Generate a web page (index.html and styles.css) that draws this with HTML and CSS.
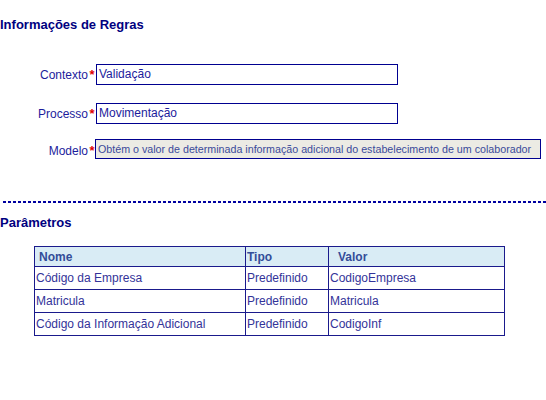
FILE: index.html
```html
<!DOCTYPE html>
<html lang="pt">
<head>
    <meta charset="UTF-8">
    <title>Informações de Regras</title>
    <link rel="stylesheet" href="styles.css">
</head>
<body>
    <h2 class="section-title">Informações de Regras</h2>
    <div class="form">
        <label class="form-label">Contexto</label>
        <span class="required">*</span>
        <div class="field">Validação</div>

        <label class="form-label">Processo</label>
        <span class="required">*</span>
        <div class="field">Movimentação</div>

        <label class="form-label">Modelo</label>
        <span class="required">*</span>
        <div class="field field-readonly">Obtém o valor de determinada informação adicional do estabelecimento de um colaborador</div>
    </div>

    <hr class="divider">

    <h2 class="section-title params-title">Parâmetros</h2>
    <table class="params">
        <tr>
            <th class="col-name">Nome</th>
            <th class="col-type">Tipo</th>
            <th class="col-value">Valor</th>
        </tr>
        <tr>
            <td>Código da Empresa</td>
            <td>Predefinido</td>
            <td>CodigoEmpresa</td>
        </tr>
        <tr>
            <td>Matricula</td>
            <td>Predefinido</td>
            <td>Matricula</td>
        </tr>
        <tr>
            <td>Código da Informação Adicional</td>
            <td>Predefinido</td>
            <td>CodigoInf</td>
        </tr>
    </table>
</body>
</html>
```

FILE: styles.css
```css
* {
    margin: 0;
    padding: 0;
    box-sizing: border-box;
    font-family: "Liberation Sans", Arial, sans-serif;
}
body {
    background: #ffffff;
    width: 546px;
    height: 400px;
    overflow: hidden;
}
.section-title {
    font-size: 13px;
    font-weight: bold;
    color: #000080;
    line-height: 15px;
    padding-top: 17px;
}
.form {
    display: grid;
    grid-template-columns: 88px 8px auto;
    align-items: center;
    row-gap: 18px;
    margin-top: 32px;
}
.form-label {
    font-size: 12px;
    color: #1c1c9c;
    text-align: right;
}
.required {
    color: #e00000;
    font-size: 13px;
    font-weight: bold;
    text-align: center;
}
.field {
    width: 302px;
    height: 21px;
    border: 1px solid #000090;
    padding-left: 2px;
    font-size: 12px;
    line-height: 19px;
    color: #1c1c9c;
}
.field-readonly {
    width: 446px;
    height: 20px;
    margin-left: -1px;
    margin-top: -3px;
    background: #ecebe4;
    font-size: 10.7px;
    line-height: 18px;
    color: #3a4a9a;
    white-space: nowrap;
    overflow: hidden;
}
.divider {
    border: none;
    height: 2px;
    margin: 42px 0 0 3px;
    background: repeating-linear-gradient(90deg, #0000a0 0 3px, transparent 3px 5px);
}
.params-title {
    padding-top: 12px;
}
.params {
    border-collapse: collapse;
    margin: 16px 0 0 34px;
    width: 471px;
    font-size: 12px;
    color: #333399;
}
.params th,
.params td {
    border: 1px solid #1a1a8c;
    text-align: left;
    padding: 0 1px;
}
.params th {
    background: #d9ecf5;
    color: #334d99;
    font-size: 12px;
    height: 20px;
}
.params td {
    height: 23px;
    vertical-align: middle;
}
.col-name {
    width: 211px;
    padding-left: 4px !important;
}
.col-type {
    width: 83px;
}
.col-value {
    padding-left: 9px !important;
}
```
